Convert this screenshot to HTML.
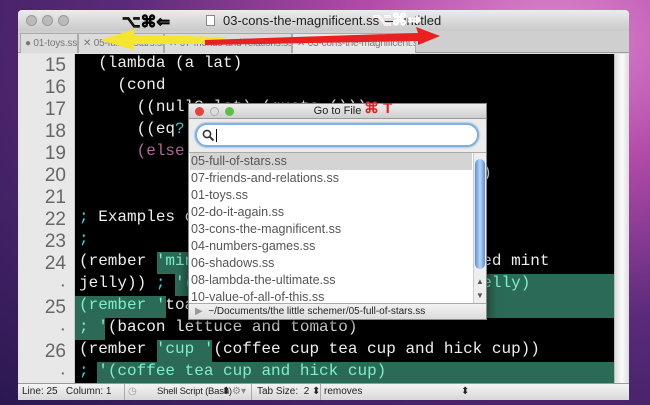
<!DOCTYPE html>
<html><head><meta charset="utf-8"><style>
*{margin:0;padding:0;box-sizing:border-box}
body{width:650px;height:405px;overflow:hidden;position:relative;background:radial-gradient(ellipse at 85% 10%,#e08ad0 0%,#b24aa8 25%,#5a2a7a 55%,#2a1850 100%);font-family:"Liberation Sans",sans-serif}
.abs{position:absolute}
.win{left:18px;top:10px;width:611px;height:390px;background:#e4e4e4;border-radius:4px 4px 0 0;overflow:hidden}
.title{left:0;top:0;width:611px;height:21px;background:linear-gradient(#ececec,#c9c9c9);font-size:12px;color:#222;text-align:center;line-height:21px}
.tabs{left:0;top:21px;width:611px;height:22px;background:#cfcfcf;border-bottom:1px solid #999}
.tab{top:2px;height:20px;background:#dcdcdc;border:1px solid #aaa;border-bottom:none;font-size:10px;color:#777;line-height:19px;padding-left:4px;white-space:nowrap;overflow:hidden;letter-spacing:-0.2px}
.gut{left:2px;top:44px;width:55px;height:329px;background:#e8e8e8;border-right:1px solid #ccc}
.gut div{position:absolute;right:8px;font:19px "Liberation Sans",sans-serif;color:#666;width:40px;text-align:right}
.code{left:57px;top:44px;width:539px;height:329px;background:#000;overflow:hidden}
.ln{position:absolute;left:4px;height:22px;line-height:22px;font:16px "Liberation Mono",monospace;color:#eee;white-space:pre}
.g{position:absolute;height:22px;background:#2c6a58}
.c{color:#3ad8e8}.m{color:#b06a9a}.t{color:#7ef0c8}
.sb{left:596px;top:44px;width:15px;height:329px;background:linear-gradient(90deg,#ddd,#fafafa,#ddd);border-left:1px solid #bbb}
.status{left:0;top:373px;width:611px;height:17px;background:linear-gradient(#f4f4f4,#d8d8d8);border-top:1px solid #999;font-size:10px;color:#222;line-height:16px;white-space:nowrap}
.dlg{left:188px;top:103px;width:299px;height:217px;background:#ececec;border:1px solid #888;box-shadow:0 4px 12px rgba(0,0,0,.6)}
.item{position:absolute;left:1px;width:282px;height:17px;font-size:12.5px;color:#555;line-height:17px;padding-left:1px}
</style></head><body>
<div class="abs win">
 <div class="abs title">
  <span class="abs" style="left:8px;top:5px;width:11px;height:11px;border-radius:50%;background:#bbb;border:1px solid #999"></span>
  <span class="abs" style="left:24px;top:5px;width:11px;height:11px;border-radius:50%;background:#bbb;border:1px solid #999"></span>
  <span class="abs" style="left:40px;top:5px;width:11px;height:11px;border-radius:50%;background:#bbb;border:1px solid #999"></span>
  <span class="abs" style="left:188px;top:5px;width:9px;height:11px;background:#fff;border:1px solid #888"></span>
  <span class="abs" style="left:205px;top:0;font-size:13px">03-cons-the-magnificent.ss — untitled</span>
 </div>
 <div class="abs tabs">
  <div class="abs tab" style="left:2px;width:58px">● 01-toys.ss</div>
  <div class="abs tab" style="left:60px;width:86px">✕ 05-full-of-stars.ss</div>
  <div class="abs tab" style="left:146px;width:128px">✕ 07-friends-and-relations.ss</div>
  <div class="abs tab" style="left:274px;width:124px;background:#e8e8e8">✕ 03-cons-the-magnificent.ss</div>
 </div>
 <div class="abs gut">
  <div style="top:1px">15</div><div style="top:23px">16</div><div style="top:45px">17</div><div style="top:67px">18</div><div style="top:89px">19</div><div style="top:111px">20</div><div style="top:133px">21</div><div style="top:155px">22</div><div style="top:177px">23</div><div style="top:199px">24</div><div style="top:221px">·</div><div style="top:243px">25</div><div style="top:265px">·</div><div style="top:287px">26</div><div style="top:309px">·</div>
 </div>
 <div class="abs code">
  <div class="g" style="left:82px;top:198px;width:60px"></div>
  <div class="g" style="left:100px;top:220px;width:439px"></div>
  <div class="g" style="left:0;top:242px;width:91px"></div>
  <div class="g" style="left:408px;top:242px;width:131px"></div>
  <div class="g" style="left:0;top:264px;width:30px"></div>
  <div class="g" style="left:82px;top:286px;width:55px"></div>
  <div class="g" style="left:22px;top:308px;width:517px"></div>
  <div class="ln" style="top:0">  (lambda (a lat)</div>
  <div class="ln" style="top:22px">    (cond</div>
  <div class="ln" style="top:44px">      ((null? lat) (quote ()))</div>
  <div class="ln" style="top:66px">      ((eq<span class="c">?</span> (car lat) a) (cdr lat))</div>
  <div class="ln" style="top:88px">      <span class="m">(else</span> (cons (car lat)</div>
  <div class="ln" style="top:110px">                  (rember a (cdr lat)))))))</div>
  <div class="ln" style="top:154px"><span class="c">;</span> Examples of rember</div>
  <div class="ln" style="top:176px"><span class="c">;</span></div>
  <div class="ln" style="top:198px">(rember <span class="t">'mint</span> '(lamb chops and mint flavored mint</div>
  <div class="ln" style="top:220px">jelly)) <span class="c">;</span> <span class="t">'(lamb chops and flavored mint jelly)</span></div>
  <div class="ln" style="top:242px"><span class="t">(rember '</span>toast '(bacon lettuce and toast)<span class="t">)</span></div>
  <div class="ln" style="top:264px"><span class="t">; '</span>(bacon lettuce and tomato)</div>
  <div class="ln" style="top:286px">(rember <span class="t">'cup '</span>(coffee cup tea cup and hick cup))</div>
  <div class="ln" style="top:308px"><span class="c">;</span> <span class="t">'(coffee tea cup and hick cup)</span></div>
 </div>
 <div class="abs sb"></div>
 <div class="abs status">
  <span class="abs" style="left:4px">Line: 25&nbsp;&nbsp; Column: 1</span>
  <span class="abs" style="left:106px;height:16px;border-left:1px solid #aaa"></span>
  <span class="abs" style="left:110px;color:#999">◷</span>
  <span class="abs" style="left:139px;font-size:9.5px;letter-spacing:-0.2px">Shell Script (Bash)</span>
  <span class="abs" style="left:204px">⬍</span>
  <span class="abs" style="left:214px;color:#888">⚙▾</span>
  <span class="abs" style="left:233px;height:16px;border-left:1px solid #aaa"></span>
  <span class="abs" style="left:239px">Tab Size:&nbsp; 2</span>
  <span class="abs" style="left:294px">⬍</span>
  <span class="abs" style="left:302px;height:16px;border-left:1px solid #aaa"></span>
  <span class="abs" style="left:306px">removes</span>
  <span class="abs" style="left:443px">⬍</span>
 </div>
</div>
<div class="abs dlg">
 <div class="abs" style="left:0;top:0;width:297px;height:15px;background:linear-gradient(#eee,#cfcfcf);border-bottom:1px solid #999;font-size:11px;text-align:center;line-height:15px;color:#222">Go to File</div>
 <span class="abs" style="left:6px;top:3px;width:9px;height:9px;border-radius:50%;background:#e0443a"></span>
 <span class="abs" style="left:21px;top:3px;width:9px;height:9px;border-radius:50%;background:#ddd;border:1px solid #aaa"></span>
 <span class="abs" style="left:36px;top:3px;width:9px;height:9px;border-radius:50%;background:#5cc046"></span>
 <div class="abs" style="left:6px;top:19px;width:284px;height:24px;background:#fff;border:2px solid #7fb0e0;border-radius:12px;box-shadow:0 0 2px #5a9ad8">
  <svg class="abs" style="left:5px;top:4px" width="13" height="13"><circle cx="5" cy="5" r="3.6" fill="none" stroke="#333" stroke-width="1.6"/><line x1="7.6" y1="7.6" x2="11.5" y2="11.5" stroke="#333" stroke-width="2"/></svg>
  <span class="abs" style="left:19px;top:4px;width:1px;height:13px;background:#000"></span></div>
 <div class="abs" style="left:0;top:48px;width:297px;height:151px;background:#fff;border-top:1px solid #aaa">
  <div class="item" style="top:0;background:#d4d4d4">05-full-of-stars.ss</div>
  <div class="item" style="top:17px">07-friends-and-relations.ss</div>
  <div class="item" style="top:34px">01-toys.ss</div>
  <div class="item" style="top:51px">02-do-it-again.ss</div>
  <div class="item" style="top:68px">03-cons-the-magnificent.ss</div>
  <div class="item" style="top:85px">04-numbers-games.ss</div>
  <div class="item" style="top:102px">06-shadows.ss</div>
  <div class="item" style="top:119px">08-lambda-the-ultimate.ss</div>
  <div class="item" style="top:136px">10-value-of-all-of-this.ss</div>
  <div class="abs" style="left:284px;top:0;width:13px;height:151px;background:#eee;border-left:1px solid #ccc">
   <div class="abs" style="left:1px;top:6px;width:10px;height:110px;border-radius:5px;background:linear-gradient(90deg,#5a8ed8,#b8d6f6,#5a8ed8)"></div>
   <div class="abs" style="left:2px;top:124px;font-size:8px;color:#555">▲</div>
   <div class="abs" style="left:2px;top:138px;font-size:8px;color:#555">▼</div>
  </div>
 </div>
 <div class="abs" style="left:0;top:199px;width:297px;height:16px;background:linear-gradient(#f2f2f2,#dcdcdc);border-top:1px solid #aaa;font-size:10px;line-height:15px;color:#222;padding-left:6px"><span style="color:#999">▶</span>&nbsp; ~/Documents/the little schemer/05-full-of-stars.ss</div>
</div>
<svg class="abs" style="left:0;top:0" width="650" height="60">
 <polygon points="100,40 135,29 134,35 225,37 224,44 134,44 134,50" fill="#f5e430"/>
 <polygon points="205,40 418,33 416,27 440,36 418,45 418,41 205,45" fill="#e82020"/>
 <text x="122" y="27" font-family="Liberation Sans,sans-serif" font-size="16" font-weight="bold" fill="#f5e430" stroke="#000" stroke-width="0.6">⌥⌘⇐</text>
 <text x="373" y="25" font-family="Liberation Sans,sans-serif" font-size="16" font-weight="bold" fill="#e82020" stroke="#fff" stroke-width="0.6">⌥⌘⇒</text>
</svg>
<div class="abs" style="left:364px;top:99px;font:bold 15px 'Liberation Sans',sans-serif;color:#e82020">⌘ T</div>
</body></html>
